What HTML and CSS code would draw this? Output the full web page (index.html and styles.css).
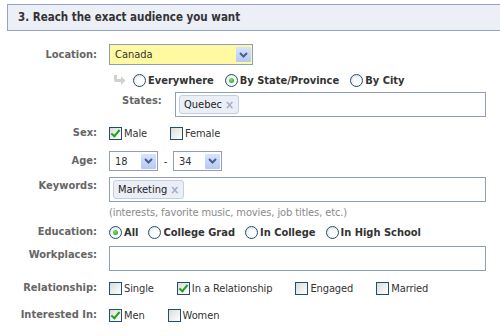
FILE: index.html
```html
<!DOCTYPE html>
<html lang="en">
<head>
    <meta charset="UTF-8">
    <title>Targeting</title>
    <link rel="stylesheet" href="styles.css">
</head>
<body>
    <div class="panel">
        <h2 class="section-title">3. Reach the exact audience you want</h2>

        <div class="form">
            <!-- Location -->
            <div class="row row-location">
                <div class="field-label">Location:</div>
                <div class="select select-location">
                    <span class="select-value">Canada</span>
                    <span class="select-btn"><svg width="9" height="6" viewBox="0 0 9 6"><path d="M1 1 L4.5 4.5 L8 1" fill="none" stroke="#4a5f86" stroke-width="2"/></svg></span>
                </div>
            </div>

            <div class="row row-scope">
                <div class="field-label"></div>
                <div class="options">
                    <svg class="bend-arrow" width="13" height="10" viewBox="0 0 13 10">
                        <path d="M1 0 L4 0 L4 4 L8 4 L8 1 L12.5 5.5 L8 10 L8 7 L3 7 Q1 7 1 5 Z" fill="#d0d0d0"/>
                    </svg>
                    <span class="option radio-opt"><i class="radio"></i>Everywhere</span>
                    <span class="option radio-opt"><i class="radio on"></i>By State/Province</span>
                    <span class="option radio-opt"><i class="radio"></i>By City</span>
                </div>
            </div>

            <div class="row row-states">
                <div class="field-label"></div>
                <div class="sub-field">
                    <div class="sub-label">States:</div>
                    <div class="text-input states-input">
                        <span class="token">Quebec <b class="token-x">&times;</b></span>
                    </div>
                </div>
            </div>

            <!-- Sex -->
            <div class="row row-sex">
                <div class="field-label">Sex:</div>
                <div class="options checks">
                    <span class="option"><i class="checkbox on"></i>Male</span>
                    <span class="option"><i class="checkbox"></i>Female</span>
                </div>
            </div>

            <!-- Age -->
            <div class="row row-age">
                <div class="field-label">Age:</div>
                <div class="age-range">
                    <div class="select select-age">
                        <span class="select-value">18</span>
                        <span class="select-btn"><svg width="9" height="6" viewBox="0 0 9 6"><path d="M1 1 L4.5 4.5 L8 1" fill="none" stroke="#4a5f86" stroke-width="2"/></svg></span>
                    </div>
                    <span class="dash">-</span>
                    <div class="select select-age">
                        <span class="select-value">34</span>
                        <span class="select-btn"><svg width="9" height="6" viewBox="0 0 9 6"><path d="M1 1 L4.5 4.5 L8 1" fill="none" stroke="#4a5f86" stroke-width="2"/></svg></span>
                    </div>
                </div>
            </div>

            <!-- Keywords -->
            <div class="row row-top row-keywords">
                <div class="field-label">Keywords:</div>
                <div class="text-input wide-input">
                    <span class="token">Marketing <b class="token-x">&times;</b></span>
                </div>
            </div>
            <div class="row row-hint">
                <div class="field-label"></div>
                <div class="hint">(interests, favorite music, movies, job titles, etc.)</div>
            </div>

            <!-- Education -->
            <div class="row row-education">
                <div class="field-label">Education:</div>
                <div class="options">
                    <span class="option radio-opt"><i class="radio on"></i>All</span>
                    <span class="option radio-opt"><i class="radio"></i>College Grad</span>
                    <span class="option radio-opt"><i class="radio"></i>In College</span>
                    <span class="option radio-opt"><i class="radio"></i>In High School</span>
                </div>
            </div>

            <!-- Workplaces -->
            <div class="row row-top row-work">
                <div class="field-label">Workplaces:</div>
                <div class="text-input wide-input"></div>
            </div>

            <!-- Relationship -->
            <div class="row row-rel">
                <div class="field-label">Relationship:</div>
                <div class="options checks">
                    <span class="option"><i class="checkbox"></i>Single</span>
                    <span class="option"><i class="checkbox on"></i>In a Relationship</span>
                    <span class="option"><i class="checkbox"></i>Engaged</span>
                    <span class="option"><i class="checkbox"></i>Married</span>
                </div>
            </div>

            <!-- Interested In -->
            <div class="row row-interest">
                <div class="field-label">Interested In:</div>
                <div class="options checks">
                    <span class="option"><i class="checkbox on"></i>Men</span>
                    <span class="option"><i class="checkbox"></i>Women</span>
                </div>
            </div>
        </div>
    </div>
</body>
</html>
```

FILE: styles.css
```css
:root {
    --label-color: #666666;
    --text-color: #333333;
    --input-border: #8f9cc0;
    --control-border: #1f4d7a;
    --check-green: #1fa11f;
}

body {
    margin: 0;
    font-family: "DejaVu Sans Condensed", "DejaVu Sans", sans-serif;
    font-size: 11px;
    color: var(--text-color);
    background: #fff;
}

.panel {
    padding-top: 4px;
}

.section-title {
    margin: 0 0 0 7px;
    height: 25px;
    line-height: 25px;
    padding-left: 10px;
    border: 1px solid #94a3c4;
    border-right: none;
    background: #eceff6;
    font-size: 11.5px;
    font-weight: bold;
    color: var(--text-color);
}

.form {
    margin-top: 13px;
}

/* Rows */
.row {
    display: flex;
    align-items: center;
    gap: 12px;
}

.row-top {
    align-items: flex-start;
}

.row-top .field-label {
    padding-top: 2px;
}

.field-label {
    width: 97px;
    flex-shrink: 0;
    text-align: right;
    font-weight: bold;
    color: var(--label-color);
    line-height: 14px;
}

.row-location { height: 21px; }
.row-scope { height: 18px; margin-top: 6px; }
.row-states { height: 25px; margin-top: 3px; }
.row-sex { height: 18px; margin-top: 7px; }
.row-age { height: 20px; margin-top: 9px; }
.row-keywords { height: 25px; margin-top: 6px; }
.row-hint { height: 14px; margin-top: 3px; }
.row-education { height: 18px; margin-top: 4px; }
.row-work { height: 25px; margin-top: 5px; }
.row-rel { height: 18px; margin-top: 8px; }
.row-interest { height: 18px; margin-top: 9px; }

/* Selects */
.select {
    box-sizing: border-box;
    display: flex;
    align-items: center;
    justify-content: space-between;
    border: 1px solid var(--input-border);
    background: #fff;
    padding: 0 1px 0 5px;
}

.select-location {
    width: 144px;
    height: 21px;
    background: #fffaa2;
}

.select-age {
    width: 49px;
    height: 20px;
}

.select-btn {
    display: flex;
    align-items: center;
    justify-content: center;
    width: 15px;
    height: 15px;
    background: linear-gradient(#d7e3fd, #b3c9f7);
    border-radius: 1px;
}

.age-range {
    display: flex;
    align-items: center;
}

.dash {
    width: 15px;
    text-align: center;
}

/* Options: radios and checkboxes */
.options {
    display: flex;
    align-items: center;
    gap: 10px;
}

.checks {
    gap: 23px;
    letter-spacing: -0.1px;
}

.option {
    display: flex;
    align-items: center;
    gap: 2px;
}

.radio-opt {
    font-weight: bold;
}

.bend-arrow {
    margin: 0 -4px 0 4px;
}

.row-scope .options {
    gap: 11px;
}

.radio {
    box-sizing: border-box;
    width: 13px;
    height: 13px;
    border-radius: 50%;
    border: 1px solid var(--control-border);
    background: radial-gradient(circle at 60% 65%, #ffffff 30%, #dcdcd6 100%);
    display: flex;
    align-items: center;
    justify-content: center;
}

.radio.on::after {
    content: "";
    width: 5px;
    height: 5px;
    border-radius: 50%;
    background: radial-gradient(circle at 40% 35%, #7be07b, #16a016);
}

.checkbox {
    box-sizing: border-box;
    width: 13px;
    height: 13px;
    border: 1px solid var(--control-border);
    background: linear-gradient(135deg, #dcdcd6, #ffffff);
    position: relative;
}

.checkbox.on::after {
    content: "";
    position: absolute;
    left: 3px;
    top: 0;
    width: 3px;
    height: 7px;
    border: solid var(--check-green);
    border-width: 0 2px 2px 0;
    transform: rotate(40deg);
}

/* Text inputs with tokens */
.text-input {
    box-sizing: border-box;
    height: 25px;
    border: 1px solid var(--input-border);
    display: flex;
    align-items: center;
    padding: 0 3px;
}

.wide-input {
    width: 377px;
}

.sub-field {
    display: flex;
    align-items: flex-start;
    padding-left: 13px;
    gap: 14px;
}

.sub-label {
    width: 39px;
    font-weight: bold;
    color: var(--label-color);
    line-height: 14px;
    padding-top: 2px;
}

.states-input {
    width: 311px;
}

.token {
    display: inline-flex;
    align-items: center;
    height: 17px;
    padding: 0 4px;
    border: 1px solid #c5cde0;
    border-radius: 3px;
    background: #eaeef6;
    color: #222;
}

.token-x {
    margin-left: 3px;
    color: #a3acc3;
    font-size: 12px;
}

.hint {
    color: #8a8a8a;
    letter-spacing: -0.1px;
}
```
